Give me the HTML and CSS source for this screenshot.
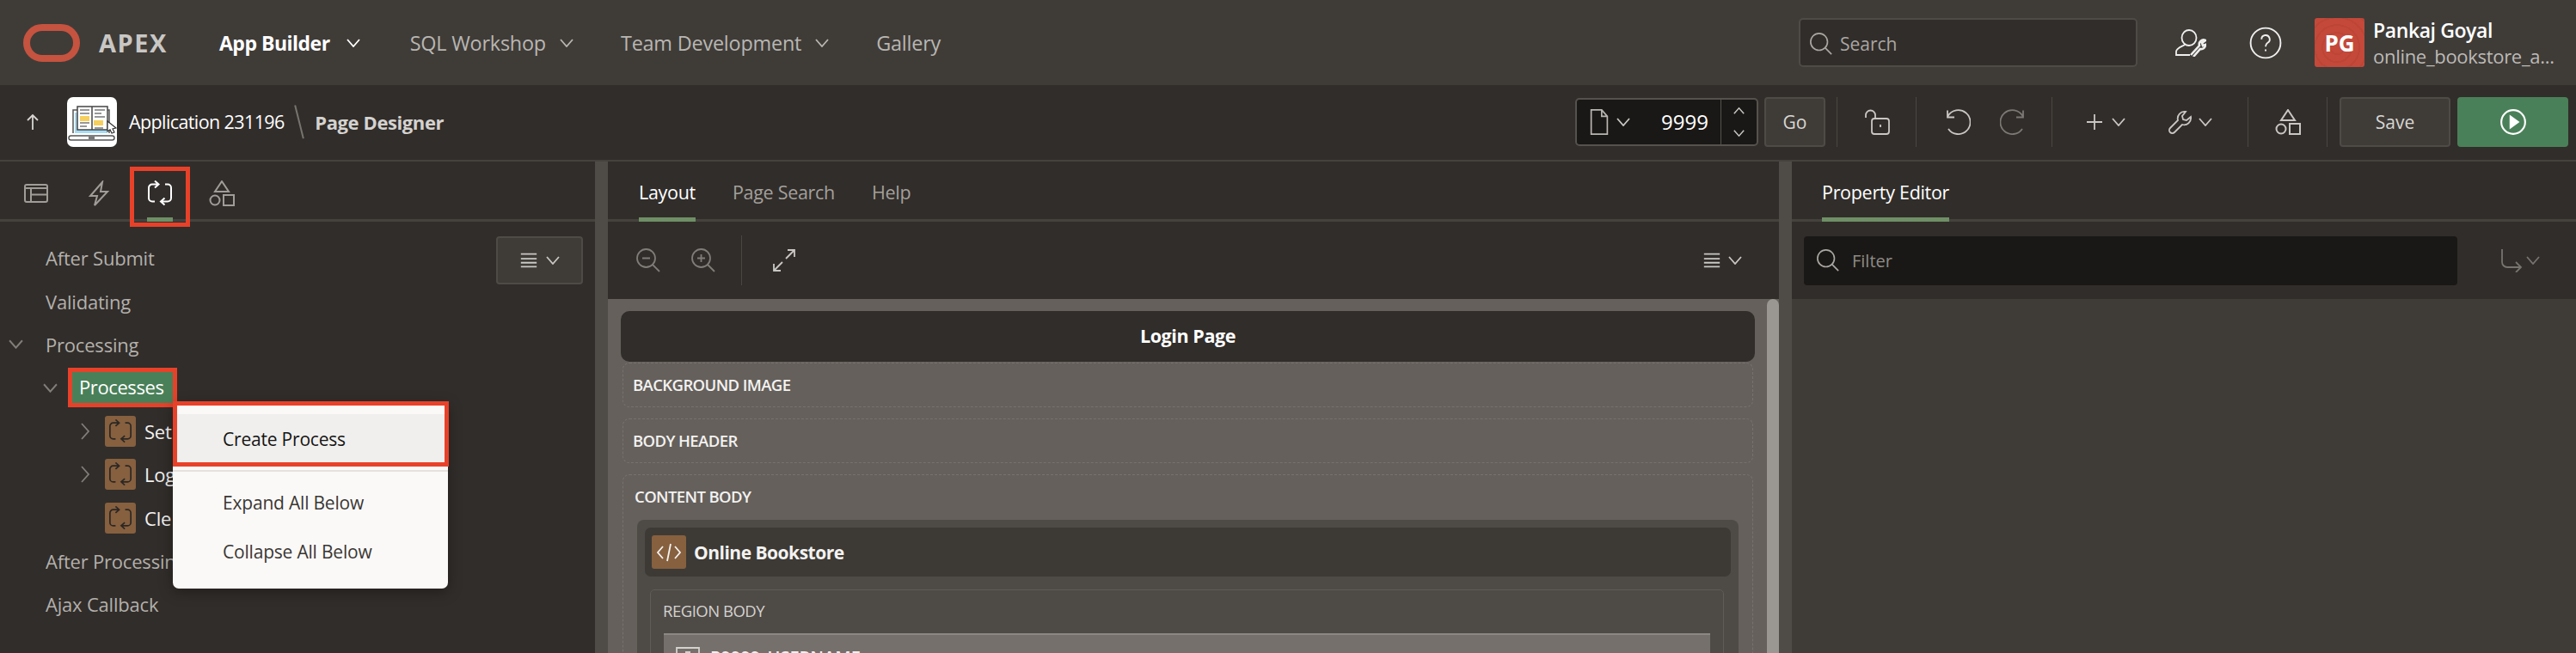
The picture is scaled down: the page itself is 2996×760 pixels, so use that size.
FILE: index.html
```html
<!DOCTYPE html>
<html lang="en">
<head>
    <meta charset="UTF-8">
    <title>Page Designer</title>
    <link rel="stylesheet" href="styles.css">
</head>
<body>
    <svg class="defs" width="0" height="0">
        <symbol id="i-process" viewBox="0 0 30 30">
            <path d="M13 4.500H6a4 4 0 0 0-4 4v12a4 4 0 0 0 4 4h3M9 .5l4.500 4-4.500 4M21 4.500h3a4 4 0 0 1 4 4v12a4 4 0 0 1-4 4h-8M20.500 20.500l-4.500 4 4.500 4"/>
        </symbol>
        <symbol id="i-shapes" viewBox="0 0 30 30">
            <path d="M15 1l8 12H7zM1.500 23a5.500 5.500 0 1 0 11 0a5.500 5.500 0 1 0-11 0zM17 17h12v12H17z"/>
        </symbol>
        <symbol id="i-menu" viewBox="0 0 24 20">
            <path d="M2 2h20M2 8h20M2 13h20M2 18h20"/>
        </symbol>
        <symbol id="i-chev" viewBox="0 0 16 10">
            <path d="M1 1l7 8 7-8"/>
        </symbol>
        <symbol id="i-chev-r" viewBox="0 0 10 20">
            <path d="M1 1l8 9-8 9"/>
        </symbol>
        <symbol id="i-search" viewBox="0 0 30 30">
            <path d="M2 12.500a10.500 10.500 0 1 0 21 0a10.500 10.500 0 1 0-21 0zM20 20l8 8"/>
        </symbol>
    </svg>

    <header class="topbar">
        <svg class="logo" viewBox="0 0 66 44"><rect x="4" y="4" width="58" height="36" rx="18"/></svg>
        <span class="brand">APEX</span>
        <nav class="mainnav">
            <a class="nav-item active">App Builder <svg class="ico chev"><use href="#i-chev"/></svg></a>
            <a class="nav-item">SQL Workshop <svg class="ico chev"><use href="#i-chev"/></svg></a>
            <a class="nav-item">Team Development <svg class="ico chev"><use href="#i-chev"/></svg></a>
            <a class="nav-item">Gallery</a>
        </nav>
        <div class="searchbox">
            <svg class="ico search-ico"><use href="#i-search"/></svg>
            <span>Search</span>
        </div>
        <svg class="ico tool-user" viewBox="0 0 36 32"><path d="M7.500 10a8.500 9 0 1 0 17 0a8.500 9 0 1 0-17 0zM11 18c-3 2-10 4-10 8v4h16"/><path class="bold-stroke" d="M18 30l10-11a5 5 0 0 1 7-6l-4 3 1 3 3-1a5 5 0 0 1-6 5L21 32"/></svg>
        <svg class="ico tool-help" viewBox="0 0 36 36"><circle cx="18" cy="18" r="16.500"/><path d="M13.500 14a4.500 4.500 0 1 1 6.500 4c-1.500 1-2 2-2 4M18 25v2"/></svg>
        <div class="avatar">PG</div>
        <div class="userinfo">
            <div class="username">Pankaj Goyal</div>
            <div class="workspace">online_bookstore_a...</div>
        </div>
    </header>

    <div class="pagebar">
        <svg class="ico up-arrow" viewBox="0 0 16 20"><path d="M8 19V2M2 8l6-6 6 6"/></svg>
        <div class="app-icon">
            <svg viewBox="0 0 58 58">
                <path class="laptop-screen" d="M7 42V15h42v27"/>
                <path class="laptop-blue" d="M9 18h38v24H9z"/>
                <path class="book" d="M12 11h17v27H12zM29 11h18v27H29z"/>
                <path class="page-line" d="M15 15h11M15 19h11M15 30h11M15 34h8M32 15h12M32 19h8M32 23h12M32 36h10"/>
                <rect class="page-yellow" x="15" y="22" width="11" height="6"/>
                <rect class="page-yellow" x="31" y="27" width="11" height="6"/>
                <rect class="laptop-base" x="2" y="45" width="53" height="5" rx="2.500"/>
                <rect class="laptop-notch" x="25" y="46" width="7" height="3"/>
                <path class="cursor" d="M47 28l10 8-4 1 2 4-3 1-2-4-3 2z"/>
            </svg>
        </div>
        <span class="app-name">Application 231196</span>
        <span class="crumb-sep"></span>
        <span class="page-title">Page Designer</span>

        <div class="pagebar-tools">
            <div class="page-picker">
                <svg class="ico page-ico" viewBox="0 0 22 32"><path d="M1 1h13l7 8v22H1zM14 1v8h7"/></svg>
                <svg class="ico chev"><use href="#i-chev"/></svg>
                <span class="page-num">9999</span>
                <div class="stepper">
                    <svg class="ico chev up"><use href="#i-chev"/></svg>
                    <svg class="ico chev"><use href="#i-chev"/></svg>
                </div>
            </div>
            <button class="btn go-btn">Go</button>
            <span class="tool-sep"></span>
            <svg class="ico tool lock" viewBox="0 0 30 30"><rect x="8" y="11" width="20" height="18" rx="3"/><path d="M1 10V7a5.500 5.500 0 0 1 11 0v4M18 18v3"/></svg>
            <span class="tool-sep"></span>
            <svg class="ico tool undo" viewBox="0 0 30 30"><path d="M3 1.500v8h8M3.500 8a14 14 0 1 1 .5 15"/></svg>
            <svg class="ico tool redo" viewBox="0 0 30 30"><path d="M27 1.500v8h-8M26.500 8a14 14 0 1 0-.5 15"/></svg>
            <span class="tool-sep"></span>
            <svg class="ico tool plus" viewBox="0 0 20 20"><path d="M10 1v18M1 10h18"/></svg>
            <svg class="ico chev"><use href="#i-chev"/></svg>
            <svg class="ico tool wrench" viewBox="0 0 28 28"><path d="M20 2a8 8 0 0 0-9 10L2 21a3.500 3.500 0 0 0 5 5l9-9a8 8 0 0 0 10-9l-5 4-4-1-1-4z"/></svg>
            <svg class="ico chev"><use href="#i-chev"/></svg>
            <span class="tool-sep"></span>
            <svg class="ico tool shapes"><use href="#i-shapes"/></svg>
            <span class="tool-sep"></span>
            <button class="btn save-btn">Save</button>
            <button class="btn run-btn">
                <svg class="ico run-ico" viewBox="0 0 30 30"><circle cx="15" cy="15" r="13"/><path class="run-tri" d="M11 7l11 8-11 8z"/></svg>
            </button>
        </div>
    </div>

    <main class="designer">
        <section class="pane left-pane">
            <div class="tabs icon-tabs">
                <div class="icon-tab">
                    <svg class="ico" viewBox="0 0 30 30"><rect x="2" y="5" width="26" height="20" rx="2"/><path d="M2 9h26M9 9v16M9 16.500h19"/></svg>
                </div>
                <div class="icon-tab">
                    <svg class="ico" viewBox="0 0 30 30"><path d="M20 2L6 18h8l-3 11 15-16h-8l2-11z"/></svg>
                </div>
                <div class="icon-tab current">
                    <svg class="ico"><use href="#i-process"/></svg>
                    <span class="tab-mark"></span>
                </div>
                <div class="icon-tab">
                    <svg class="ico"><use href="#i-shapes"/></svg>
                </div>
            </div>
            <div class="tree-wrap">
                <button class="btn menu-btn">
                    <svg class="ico menu-ico"><use href="#i-menu"/></svg>
                    <svg class="ico chev"><use href="#i-chev"/></svg>
                </button>
                <ul class="tree">
                    <li class="tree-row"><span class="tree-label">After Submit</span></li>
                    <li class="tree-row"><span class="tree-label">Validating</span></li>
                    <li class="tree-row">
                        <svg class="ico tree-chev"><use href="#i-chev"/></svg>
                        <span class="tree-label">Processing</span>
                    </li>
                    <li class="tree-row lvl1">
                        <svg class="ico tree-chev"><use href="#i-chev"/></svg>
                        <span class="tree-label selected">Processes</span>
                    </li>
                    <li class="tree-row lvl2">
                        <svg class="ico tree-chev-r"><use href="#i-chev-r"/></svg>
                        <span class="proc-badge"><svg class="ico"><use href="#i-process"/></svg></span>
                        <span class="tree-label bright">Set</span>
                    </li>
                    <li class="tree-row lvl2">
                        <svg class="ico tree-chev-r"><use href="#i-chev-r"/></svg>
                        <span class="proc-badge"><svg class="ico"><use href="#i-process"/></svg></span>
                        <span class="tree-label bright">Log</span>
                    </li>
                    <li class="tree-row lvl2">
                        <span class="proc-badge"><svg class="ico"><use href="#i-process"/></svg></span>
                        <span class="tree-label bright">Cle</span>
                    </li>
                    <li class="tree-row"><span class="tree-label clipped">After Processing</span></li>
                    <li class="tree-row"><span class="tree-label">Ajax Callback</span></li>
                </ul>
            </div>
            <div class="context-menu">
                <span class="menu-mark"></span>
                <div class="menu-item hover">Create Process</div>
                <div class="menu-sep"></div>
                <div class="menu-item">Expand All Below</div>
                <div class="menu-item">Collapse All Below</div>
            </div>
        </section>

        <div class="splitter"></div>

        <section class="pane mid-pane">
            <div class="tabs text-tabs">
                <a class="text-tab current">Layout</a>
                <a class="text-tab">Page Search</a>
                <a class="text-tab">Help</a>
            </div>
            <div class="layout-tools">
                <svg class="ico zoom-ico" viewBox="0 0 30 30"><path d="M2 12.500a10.500 10.500 0 1 0 21 0a10.500 10.500 0 1 0-21 0zM20 20l8 8M8 12.500h9"/></svg>
                <svg class="ico zoom-ico" viewBox="0 0 30 30"><path d="M2 12.500a10.500 10.500 0 1 0 21 0a10.500 10.500 0 1 0-21 0zM20 20l8 8M8 12.500h9M12.500 8v9"/></svg>
                <span class="tool-sep tall"></span>
                <svg class="ico expand-ico" viewBox="0 0 28 28"><path d="M16 12L26 2M18 2h8v8M12 16L2 26M2 18v8h8"/></svg>
                <span class="tools-right">
                    <svg class="ico menu-ico"><use href="#i-menu"/></svg>
                    <svg class="ico chev"><use href="#i-chev"/></svg>
                </span>
            </div>
            <div class="canvas">
                <div class="canvas-scroll"></div>
                <div class="page-head">Login Page</div>
                <div class="slot">BACKGROUND IMAGE</div>
                <div class="slot">BODY HEADER</div>
                <div class="slot content-slot">
                    <div class="slot-title">CONTENT BODY</div>
                    <div class="region">
                        <div class="region-head">
                            <span class="region-badge">
                                <svg class="ico" viewBox="0 0 30 24"><path d="M8 5l-6 7 6 7M22 5l6 7-6 7M17 2l-4 20"/></svg>
                            </span>
                            Online Bookstore
                        </div>
                        <div class="region-body">
                            <div class="region-title">REGION BODY</div>
                            <div class="page-item">
                                <svg class="ico item-ico" viewBox="0 0 28 24"><path d="M1 1h26v22H1zM14 6v12M11 6h6M11 18h6"/></svg>
                                P9999_USERNAME
                            </div>
                        </div>
                    </div>
                </div>
            </div>
        </section>

        <div class="splitter"></div>

        <section class="pane right-pane">
            <div class="tabs text-tabs prop-tabs">
                <a class="text-tab current">Property Editor</a>
            </div>
            <div class="filter-row">
                <div class="filter-box">
                    <svg class="ico search-ico"><use href="#i-search"/></svg>
                    <span>Filter</span>
                </div>
                <svg class="ico goto-ico" viewBox="0 0 26 28"><path d="M2 1v15a6 6 0 0 0 6 6h16M18 16l6 6-6 6"/></svg>
                <svg class="ico chev"><use href="#i-chev"/></svg>
            </div>
            <div class="prop-body"></div>
        </section>
    </main>
</body>
</html>
```

FILE: styles.css
```css
* {
    box-sizing: border-box;
}
html, body {
    margin: 0;
    height: 760px;
    overflow: hidden;
}
body {
    font-family: "Open Sans", "Noto Sans", sans-serif;
    font-size: 22px;
    background-color: #312d2a;
    color: #fff;
}
.defs {
    position: absolute;
}
.ico {
    fill: none;
    stroke: currentColor;
    stroke-width: 1.8;
    flex: none;
    width: 30px;
    height: 30px;
}
.chev {
    width: 16px;
    height: 10px;
}

/* top bar */
.topbar {
    height: 99px;
    background-color: #3f3c38;
    display: flex;
    align-items: center;
    padding: 0 9px 0 27px;
}
.logo {
    width: 66px;
    height: 44px;
    fill: none;
    stroke: #c5533f;
    stroke-width: 8;
}
.brand {
    margin-left: 22px;
    width: 140px;
    font-size: 29px;
    font-weight: 700;
    letter-spacing: 1.5px;
    color: #c9c7c4;
}
.mainnav {
    display: flex;
    flex: 1;
}
.nav-item {
    color: #b9b6b2;
    display: flex;
    align-items: center;
    gap: 16px;
    margin-right: 55px;
    font-size: 23.400px;
    letter-spacing: -0.2px;
}
.nav-item.active {
    color: #fff;
    font-weight: 700;
    font-size: 23px;
    letter-spacing: -0.5px;
    gap: 19px;
    margin-right: 58px;
}
.searchbox {
    width: 394px;
    height: 57px;
    background-color: #312d2a;
    border: 2px solid #4e4b47;
    border-radius: 5px;
    display: flex;
    align-items: center;
    gap: 8px;
    padding: 2px 0 0 10px;
    color: #aaa7a3;
    font-size: 21px;
}
.search-ico {
    color: #aaa7a3;
    width: 28px;
    height: 30px;
}
.tool-user {
    width: 36px;
    height: 32px;
    margin-left: 44px;
    color: #f0efee;
}
.bold-stroke {
    stroke-width: 2.600;
}
.tool-help {
    width: 38px;
    height: 38px;
    margin-left: 50px;
    color: #f0efee;
}
.avatar {
    margin-left: 38px;
    width: 58px;
    height: 57px;
    background: repeating-radial-gradient(circle at 45% 60%, #c4493a 0 7px, #bd4536 7px 9px);
    border-radius: 3px;
    display: flex;
    align-items: center;
    justify-content: center;
    font-size: 26px;
    font-weight: 700;
    flex: none;
}
.userinfo {
    margin-left: 10px;
    width: 227px;
    flex: none;
    line-height: 30px;
    white-space: nowrap;
}
.username {
    font-weight: 600;
    font-size: 23px;
    letter-spacing: -0.4px;
}
.workspace {
    color: #bdbab6;
    font-size: 22px;
    letter-spacing: -0.3px;
}

/* page bar */
.pagebar {
    height: 89px;
    border-bottom: 2px solid #45423e;
    display: flex;
    align-items: center;
    padding: 0 9px 2px 30px;
    color: #e6e5e3;
}
.up-arrow {
    width: 16px;
    height: 20px;
    color: #d8d6d3;
}
.app-icon {
    margin-left: 32px;
    width: 58px;
    height: 58px;
    background-color: #fff;
    border-radius: 7px;
    overflow: hidden;
}
.app-icon svg {
    display: block;
}
.laptop-screen {
    fill: none;
    stroke: #555;
    stroke-width: 1.500;
}
.laptop-blue {
    fill: #a9daf2;
}
.book {
    fill: #fff;
    stroke: #444;
    stroke-width: 1.500;
}
.page-line {
    stroke: #777;
    stroke-width: 1.500;
}
.page-yellow {
    fill: #f6cf5d;
}
.laptop-base {
    fill: #fff;
    stroke: #555;
    stroke-width: 1.500;
}
.laptop-notch {
    fill: #777;
}
.cursor {
    fill: #fff;
    stroke: #333;
    stroke-width: 1.200;
}
.app-name {
    margin-left: 14px;
    color: #fff;
    font-size: 21.500px;
    letter-spacing: -0.6px;
}
.crumb-sep {
    margin: 0 18px 0 16px;
    width: 1.500px;
    height: 40px;
    background-color: #77736e;
    transform: rotate(-14deg);
}
.page-title {
    font-weight: 700;
    color: #d4d2cf;
    font-size: 22px;
    letter-spacing: -0.4px;
}
.pagebar-tools {
    margin-left: auto;
    display: flex;
    align-items: center;
}
.pagebar-tools .chev {
    color: #c9c7c4;
}
.btn {
    font-family: inherit;
    background-color: #3f3c38;
    border: 2px solid #4e4b47;
    border-radius: 4px;
    color: #d8d6d3;
    font-size: 21px;
    display: flex;
    align-items: center;
    justify-content: center;
}
.page-picker {
    width: 213px;
    height: 56px;
    background-color: #1a1816;
    border: 2px solid #55524e;
    border-radius: 5px;
    display: flex;
    align-items: center;
    padding-left: 15px;
    color: #b9b6b2;
}
.page-ico {
    width: 22px;
    height: 30px;
    margin-right: 9px;
}
.page-num {
    margin-left: auto;
    color: #fff;
    font-size: 24px;
    margin-right: 14px;
}
.stepper {
    width: 42px;
    height: 100%;
    border-left: 1px solid #55524e;
    display: flex;
    flex-direction: column;
    align-items: center;
    justify-content: space-around;
}
.stepper .chev {
    width: 13px;
}
.stepper .up {
    transform: rotate(180deg);
}
.go-btn {
    margin: 0 13px 0 7px;
    width: 71px;
    height: 58px;
}
.tool-sep {
    width: 1px;
    height: 58px;
    background-color: #4a4743;
    flex: none;
}
.tool {
    color: #c9c7c4;
    width: 30px;
    height: 30px;
}
.lock {
    margin: 0 29px 0 32px;
}
.undo {
    margin-left: 33px;
}
.redo {
    margin: 0 30px 0 34px;
    color: #7c7975;
}
.plus {
    margin-left: 39px;
    width: 20px;
    height: 20px;
}
.pagebar-tools .plus + .chev {
    margin-left: 10px;
}
.wrench {
    margin-left: 50px;
    width: 28px;
    height: 28px;
}
.pagebar-tools .wrench + .chev {
    margin: 0 41px 0 7px;
}
.shapes {
    margin: 0 30px 0 31px;
    stroke-width: 2;
}
.save-btn {
    margin-left: 14px;
    width: 129px;
    height: 58px;
}
.run-btn {
    margin-left: 8px;
    width: 129px;
    height: 58px;
    background-color: #4a8059;
    border-color: #4a8059;
}
.run-ico {
    width: 32px;
    height: 32px;
    color: #fff;
    stroke-width: 2;
}
.run-tri {
    fill: #fff;
    stroke: none;
}

/* three panes */
.designer {
    height: 572px;
    display: grid;
    grid-template-columns: 692px 15px 1362px 15px 1fr;
}
.pane {
    position: relative;
    height: 572px;
    overflow: hidden;
}
.left-pane {
    overflow: visible;
}
.splitter {
    background-color: #4f4c48;
}
.tabs {
    height: 70px;
    border-bottom: 3px solid #45423e;
    display: flex;
}
.icon-tabs {
    padding-left: 27px;
    gap: 42px;
}
.icon-tab {
    width: 30px;
    height: 70px;
    padding-top: 22px;
    color: #a09d99;
    position: relative;
}
.icon-tab .ico {
    stroke-width: 2;
}
.icon-tab.current {
    color: #fff;
    border-bottom: 5px solid #6f8f66;
}
.tab-mark {
    position: absolute;
    left: -20px;
    top: 6px;
    width: 70px;
    height: 70px;
    border: 5px solid #e8412a;
}
.tree-wrap {
    position: relative;
    padding-top: 17px;
}
.menu-btn {
    position: absolute;
    top: 17px;
    left: 577px;
    width: 101px;
    height: 56px;
    gap: 9px;
    color: #c9c7c4;
}
.menu-ico {
    width: 22px;
    height: 20px;
    stroke-width: 2;
}
.tree {
    list-style: none;
    margin: 0;
    padding: 0;
}
.tree-row {
    height: 50.400px;
    padding-left: 53px;
    display: flex;
    align-items: center;
    position: relative;
    white-space: nowrap;
}
.tree-label {
    color: #b3b0ac;
    letter-spacing: -0.2px;
}
.tree-label.clipped {
    max-width: 148px;
    overflow: hidden;
}
.tree-label.bright {
    color: #f3f2f1;
    margin-left: 10px;
}
.tree-label.selected {
    color: #fff;
    background-color: #4a8059;
    border: 5px solid #e8412a;
    padding: 0 8px;
    height: 46px;
    width: 127px;
    line-height: 34px;
    letter-spacing: -0.4px;
    margin-left: -8px;
}
.tree-chev {
    position: absolute;
    left: 10px;
    width: 17px;
    height: 11px;
    color: #817e7a;
}
.lvl1 {
    padding-left: 87px;
}
.lvl1 .tree-chev {
    left: 50px;
}
.lvl2 {
    padding-left: 122px;
}
.tree-chev-r {
    position: absolute;
    left: 94px;
    width: 10px;
    height: 20px;
    color: #817e7a;
}
.proc-badge {
    width: 36px;
    height: 36px;
    background-color: #86603f;
    border-radius: 3px;
    color: #2b2724;
    display: flex;
    align-items: center;
    justify-content: center;
}
.proc-badge .ico {
    width: 28px;
    height: 28px;
}
.context-menu {
    position: absolute;
    left: 201px;
    top: 280px;
    width: 320px;
    height: 217px;
    background-color: #fbf9f8;
    border-radius: 0 0 7px 7px;
    box-shadow: 0 4px 16px rgba(0,0,0,0.35);
    padding-top: 14px;
    color: #3a3733;
    font-size: 21px;
    letter-spacing: -0.2px;
}
.menu-mark {
    position: absolute;
    left: 0;
    top: -1px;
    width: 321px;
    height: 76px;
    border: 5px solid #e8412a;
    z-index: 1;
}
.menu-item {
    height: 57px;
    padding-left: 58px;
    display: flex;
    align-items: center;
}
.menu-item.hover {
    height: 56px;
    padding-top: 2px;
    background-color: #f0efee;
    color: #161513;
}
.menu-sep {
    height: 2px;
    margin: 9px 0 7px;
    background-color: #e4e1de;
}

/* middle */
.text-tabs {
    padding-left: 36px;
    gap: 43px;
}
.text-tab {
    height: 70px;
    line-height: 42px;
    padding-top: 15px;
    color: #a3a09c;
    font-size: 21.500px;
    letter-spacing: -0.3px;
}
.text-tab.current {
    color: #fff;
    border-bottom: 5px solid #6f8f66;
}
.layout-tools {
    height: 90px;
    display: flex;
    align-items: center;
    padding: 0 43px 0 32px;
    color: #807d79;
}
.zoom-ico {
    width: 30px;
    height: 30px;
    margin-right: 34px;
}
.tool-sep.tall {
    margin: 0 0 0 -5px;
}
.expand-ico {
    margin-left: 35px;
    width: 28px;
    height: 28px;
    color: #c9c7c4;
}
.tools-right {
    margin-left: auto;
    display: flex;
    align-items: center;
    gap: 8px;
    color: #c9c7c4;
}
.canvas {
    position: relative;
    height: 412px;
    background-color: #65605b;
    padding: 14px 28px 0 15px;
}
.canvas-scroll {
    position: absolute;
    top: 0;
    right: 0;
    width: 14px;
    height: 100%;
    background-color: #9a9692;
    border-radius: 7px 7px 0 0;
}
.page-head {
    height: 59px;
    padding-bottom: 3px;
    background-color: #312d2a;
    border-radius: 10px;
    display: flex;
    align-items: center;
    justify-content: center;
    font-weight: 700;
    font-size: 21.500px;
    letter-spacing: -0.4px;
}
.slot {
    margin: 0 2px 13px;
    height: 52px;
    border: 1px dashed #77726d;
    border-radius: 8px;
    padding-left: 11px;
    line-height: 50px;
    font-size: 18.500px;
    font-weight: 600;
    letter-spacing: -0.6px;
    color: #f3f2f1;
}
.page-head + .slot {
    margin-top: 1px;
}
.content-slot {
    height: 300px;
    padding: 0 16px;
}
.slot-title {
    height: 52px;
    margin-left: -3px;
}
.region {
    background-color: #4e4a46;
    border-radius: 8px;
    height: 300px;
    padding: 9px;
}
.region-head {
    height: 57px;
    background-color: #3d3a35;
    border-radius: 7px;
    display: flex;
    align-items: center;
    padding-left: 8px;
    gap: 9px;
    font-size: 21px;
    font-weight: 700;
    letter-spacing: -0.5px;
}
.region-badge {
    width: 40px;
    height: 39px;
    background-color: #86603f;
    border-radius: 3px;
    color: #f3f2f1;
    display: flex;
    align-items: center;
    justify-content: center;
}
.region-badge .ico {
    width: 30px;
    height: 24px;
}
.region-body {
    margin: 15px 8px 0 6px;
    height: 200px;
    border: 1px solid #5f5b56;
    border-radius: 5px;
    padding: 0 15px;
}
.region-title {
    height: 50px;
    line-height: 48px;
    margin-left: -1px;
    font-weight: 400;
    color: #d4d2cf;
    font-size: 18.500px;
    letter-spacing: -0.5px;
}
.page-item {
    height: 60px;
    background-color: #75706b;
    border-top: 2px solid #8b8782;
    display: flex;
    align-items: flex-start;
    gap: 12px;
    padding: 14px 0 0 14px;
    line-height: 24px;
    font-weight: 600;
    font-size: 20px;
    letter-spacing: 0;
}
.item-ico {
    width: 28px;
    height: 24px;
    color: #d4d2cf;
}

/* right */
.prop-tabs {
    padding-left: 35px;
}
.filter-row {
    height: 90px;
    display: flex;
    align-items: center;
    padding-left: 14px;
    color: #77736f;
}
.filter-box {
    width: 760px;
    height: 57px;
    background-color: #1a1816;
    border-radius: 4px;
    display: flex;
    align-items: center;
    gap: 14px;
    padding-left: 14px;
    font-size: 20px;
    color: #8e8b87;
}
.goto-ico {
    margin-left: 50px;
    width: 26px;
    height: 28px;
}
.goto-ico + .chev {
    margin-left: 4px;
}
.prop-body {
    height: 412px;
    background-color: #3f3c38;
}
```
